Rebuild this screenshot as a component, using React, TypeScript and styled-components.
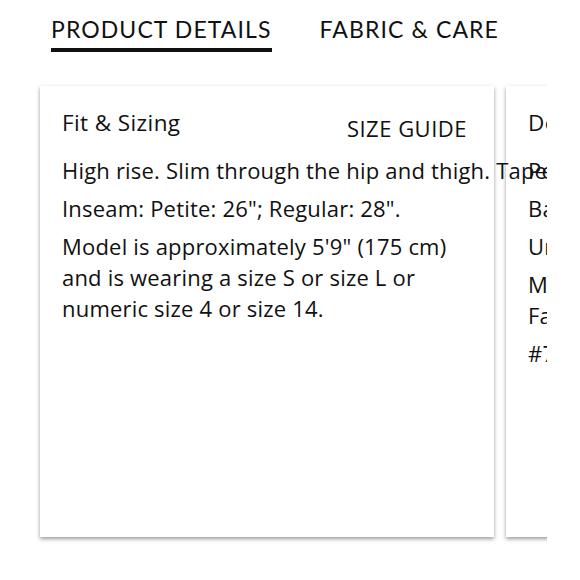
import styled, {createGlobalStyle} from "styled-components";

const GlobalStyle = createGlobalStyle`
  body {
    margin: 0;
    background: #ffffff;
    color: #111111;
    font-family: "Open Sans", "Liberation Sans", sans-serif;
  }
`

const Page = styled.div`
  width: 580px;
  height: 580px;
  overflow: hidden;
`

const TabBar = styled.div`
  display: flex;
  gap: 48px;
  padding: 14px 0 0 51px;
  height: 66px;
  box-sizing: border-box;
`

const Tab = styled.div<{ $active?: boolean }>`
  font-family: "Lato", "Liberation Sans", sans-serif;
  font-size: 23px;
  letter-spacing: 1.1px;
  line-height: 30px;
  padding-bottom: 4px;
  height: 38px;
  box-sizing: border-box;
  border-bottom: 4px solid ${props => props.$active ? "#111111" : "transparent"};
  white-space: nowrap;
`

const Carousel = styled.div`
  margin-left: 32px;
  width: 515px;
  overflow: hidden;
  padding: 20px 0 10px 8px;
  box-sizing: border-box;
  display: flex;
  gap: 12px;
`

const Card = styled.div`
  flex: 0 0 454px;
  min-width: 0;
  height: 451px;
  box-sizing: border-box;
  background: #ffffff;
  box-shadow: 0 2px 4px rgba(0, 0, 0, 0.4);
  padding: 22px 27px 0 22px;
`

const CardHeader = styled.div`
  display: flex;
  justify-content: space-between;
  align-items: flex-start;
  height: 47px;
`

const CardTitle = styled.div`
  font-size: 22.5px;
  letter-spacing: 0.4px;
  line-height: 30px;
  white-space: nowrap;
`

const SizeGuide = styled.div`
  font-size: 22px;
  letter-spacing: 0.5px;
  line-height: 30px;
  margin-top: 5px;
  white-space: nowrap;
`

// positioned so an overflowing line stays above the next card's background
const Para = styled.p<{ $nowrap?: boolean }>`
  position: relative;
  margin: 0 0 7px 0;
  font-size: 22px;
  letter-spacing: 0.2px;
  line-height: 31px;
  white-space: ${props => props.$nowrap ? "nowrap" : "normal"};
`

const App = () => {
    return (
        <Page>
            <GlobalStyle/>
            <TabBar>
                <Tab $active>PRODUCT DETAILS</Tab>
                <Tab>FABRIC &amp; CARE</Tab>
            </TabBar>
            <Carousel>
                <Card>
                    <CardHeader>
                        <CardTitle>Fit &amp; Sizing</CardTitle>
                        <SizeGuide>SIZE GUIDE</SizeGuide>
                    </CardHeader>
                    <Para $nowrap>High rise. Slim through the hip and thigh. Tapered leg.</Para>
                    <Para>Inseam: Petite: 26"; Regular: 28".</Para>
                    <Para>Model is approximately 5'9" (175 cm) and is wearing a size S or size L or numeric size 4 or size 14.</Para>
                </Card>
                <Card>
                    <CardHeader>
                        <CardTitle>Details</CardTitle>
                    </CardHeader>
                    <Para>Perfect for everyday wear.</Para>
                    <Para>Back patch pockets.</Para>
                    <Para>Unlined.</Para>
                    <Para>Machine wash cold with like colors. Faux fly, button closure.</Para>
                    <Para>#741286</Para>
                </Card>
            </Carousel>
        </Page>
    )
}

export default App;
